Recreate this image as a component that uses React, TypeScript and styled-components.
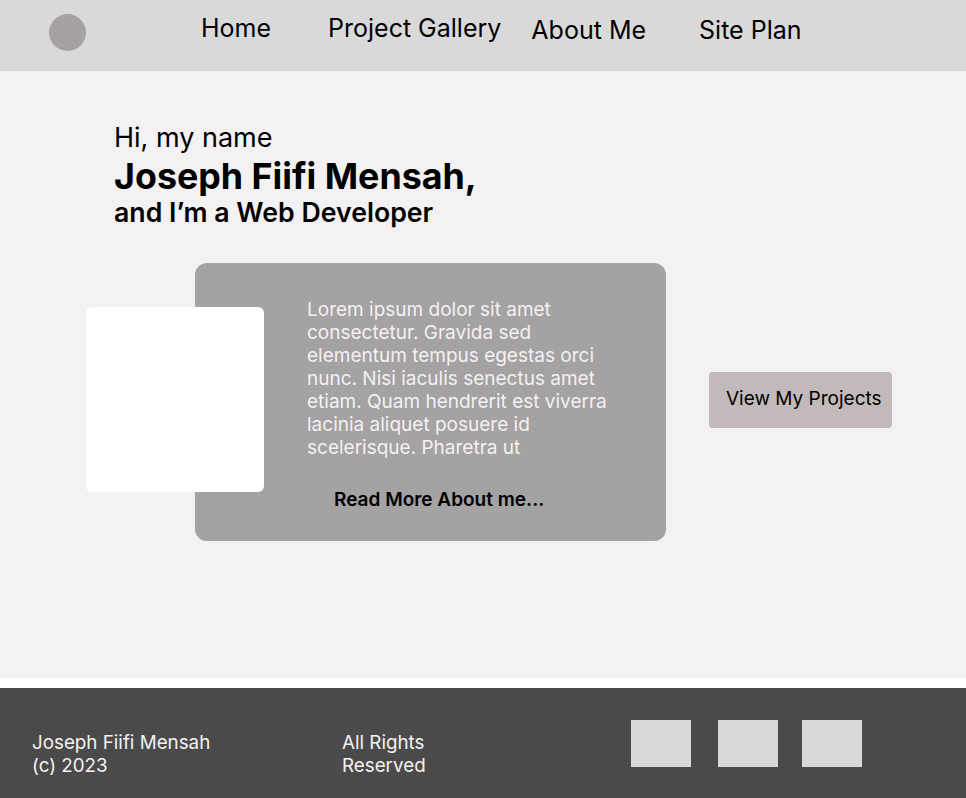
import styled, { createGlobalStyle } from "styled-components";

const GlobalStyle = createGlobalStyle`
    body {
        margin: 0;
        font-family: Inter, "Noto Sans", sans-serif;
        background-color: #ffffff;
    }
`

const Page = styled.div`
    width: 966px;
    height: 798px;
    display: flex;
    flex-direction: column;
`

const Header = styled.header`
    height: 71px;
    background-color: #d9d9d9;
    display: flex;
    align-items: center;
    padding-left: 49px;
    box-sizing: border-box;
`

const Logo = styled.div`
    width: 37px;
    height: 37px;
    border-radius: 50%;
    background-color: #a6a2a2;
    margin-top: -7px;
`

const Nav = styled.nav`
    display: flex;
    align-items: center;
    margin-left: 115px;
`

const NavLink = styled.a<{ $gap: number, $shift: number }>`
    margin-left: ${props => props.$gap}px;
    margin-top: ${props => props.$shift}px;
    font-size: 25px;
    color: #000;
    text-decoration: none;
`

const Main = styled.main`
    height: 607px;
    background-color: #f3f1f2;
    padding: 50px 0 0 86px;
    box-sizing: border-box;
`

const Intro = styled.section`
    padding-left: 28px;
`

const Greeting = styled.p`
    margin: 0;
    font-size: 27px;
    line-height: 34px;
`

const Name = styled.h1`
    margin: 0;
    font-size: 35.8px;
    font-weight: 700;
    line-height: 42px;
`

const Role = styled.h2`
    margin: 0;
    font-size: 26.7px;
    font-weight: 600;
    line-height: 30px;
`

const Hero = styled.section`
    display: flex;
    align-items: center;
    margin-top: 36px;
`

const Photo = styled.div`
    position: relative;
    z-index: 1;
    width: 178px;
    height: 185px;
    background-color: #ffffff;
    border-radius: 6px;
    align-self: flex-start;
    margin-top: 44px;
`

const Card = styled.div`
    width: 471px;
    height: 278px;
    margin-left: -69px;
    background-color: #a4a2a3;
    border-radius: 12px;
    padding: 35px 0 0 112px;
    box-sizing: border-box;
`

const Blurb = styled.p`
    margin: 0;
    width: 310px;
    font-size: 19px;
    line-height: 23px;
    color: #f3f1f2;
`

const ReadMore = styled.a`
    display: block;
    margin: 29px 0 0 27px;
    font-size: 19px;
    font-weight: 600;
    color: #000;
`

const ProjectsButton = styled.button`
    margin: 0 0 4px 43px;
    width: 183px;
    height: 56px;
    border: none;
    border-radius: 4px;
    background-color: #c2baba;
    font-family: inherit;
    font-size: 19px;
    color: #000;
    padding: 0 0 3px 17px;
    text-align: left;
`

const Footer = styled.footer`
    margin-top: 10px;
    height: 110px;
    background-color: #4a4a4a;
    display: flex;
    align-items: center;
    padding-left: 32px;
    box-sizing: border-box;
`

const FooterText = styled.p<{ $width: number }>`
    margin: 0;
    width: ${props => props.$width}px;
    font-size: 18.8px;
    line-height: 23px;
    color: #f3f1f2;
    padding-top: 22px;
`

const Socials = styled.div`
    display: flex;
`

const Social = styled.div<{ $gap: number }>`
    width: 60px;
    height: 47px;
    margin-left: ${props => props.$gap}px;
    background-color: #d9d9d9;
`

function App() {

    return (
        <Page>
            <GlobalStyle/>
            <Header>
                <Logo/>
                <Nav>
                    <NavLink $gap={0} $shift={-15}>Home</NavLink>
                    <NavLink $gap={57} $shift={-15}>Project Gallery</NavLink>
                    <NavLink $gap={30} $shift={-11}>About Me</NavLink>
                    <NavLink $gap={53} $shift={-11}>Site Plan</NavLink>
                </Nav>
            </Header>
            <Main>
                <Intro>
                    <Greeting>Hi, my name</Greeting>
                    <Name>Joseph Fiifi Mensah,</Name>
                    <Role>and I’m a Web Developer</Role>
                </Intro>
                <Hero>
                    <Photo/>
                    <Card>
                        <Blurb>
                            Lorem ipsum dolor sit amet consectetur. Gravida sed elementum tempus egestas orci nunc. Nisi iaculis senectus amet etiam. Quam hendrerit est viverra lacinia aliquet posuere id scelerisque. Pharetra ut
                        </Blurb>
                        <ReadMore>Read More About me...</ReadMore>
                    </Card>
                    <ProjectsButton>View My Projects</ProjectsButton>
                </Hero>
            </Main>
            <Footer>
                <FooterText $width={310}>Joseph Fiifi Mensah<br/>(c) 2023</FooterText>
                <FooterText $width={289}>All Rights<br/>Reserved</FooterText>
                <Socials>
                    <Social $gap={0}/>
                    <Social $gap={27}/>
                    <Social $gap={24}/>
                </Socials>
            </Footer>
        </Page>
    )
}

export default App
